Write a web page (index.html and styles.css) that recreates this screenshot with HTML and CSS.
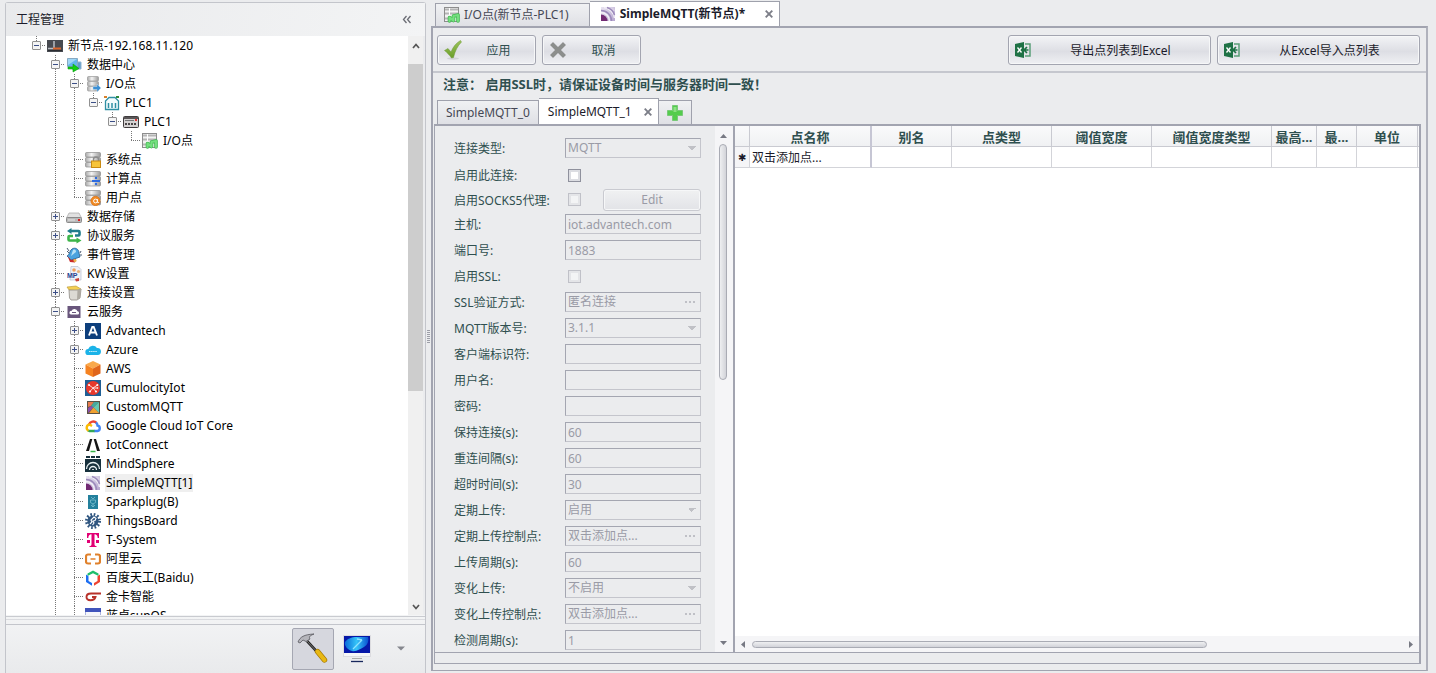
FILE: index.html
```html
<!DOCTYPE html>
<html lang="zh-CN">
<head>
<meta charset="utf-8">
<title>工程管理</title>
<link rel="stylesheet" href="styles.css">
</head>
<body>
<svg class="defs" width="0" height="0" aria-hidden="true">
  <defs>
    <linearGradient id="g-steel" x1="0" x2="1"><stop offset="0" stop-color="#a9a9a9"/><stop offset=".4" stop-color="#f4f4f4"/><stop offset="1" stop-color="#9a9a9a"/></linearGradient>
    <linearGradient id="g-check" x1="0" x2="0" y1="0" y2="1"><stop offset="0" stop-color="#9cc35a"/><stop offset="1" stop-color="#6a9e2a"/></linearGradient>
    <linearGradient id="g-screen" x1="0" x2="1"><stop offset="0" stop-color="#0a6ad8"/><stop offset=".5" stop-color="#35c4f8"/><stop offset="1" stop-color="#0a4fd0"/></linearGradient>
    <linearGradient id="g-orb" x1="0" x2="1" y1="0" y2="1"><stop offset="0" stop-color="#e9e4f1"/><stop offset="1" stop-color="#b6a6cf"/></linearGradient>
  </defs>
  <symbol id="i-node" viewBox="0 0 16 16"><rect y="2" width="16" height="12" fill="#474a50"/><path d="M7 3v8M1 10.500h5" stroke="#b9bdc2" stroke-width="1.500"/><path d="M6 10.500h8" stroke="#d9652d" stroke-width="2"/><path d="M1 12.500h14" stroke="#2c2e33"/></symbol>
  <symbol id="i-center" viewBox="0 0 16 16"><path d="M6 5h9v7H6z" fill="#5f9ccc" stroke="#8fb4d0"/><path d="M1.500 1.500h10v8h-10z" fill="#63b6ec" stroke="#87a9c2"/><path d="M2 2h9L2 8z" fill="#9fd6f6"/><path d="M2 10h5V7l6 4.500L7 15v-3H2z" fill="#12d012" stroke="#0a9c12" stroke-width=".6"/></symbol>
  <symbol id="i-stack" viewBox="0 0 16 16"><rect x=".5" y="0.500" width="15" height="4.500" rx="1" fill="url(#g-steel)" stroke="#8d8d8d" stroke-width=".7"/><rect x=".5" y="5.500" width="15" height="4.500" rx="1" fill="url(#g-steel)" stroke="#8d8d8d" stroke-width=".7"/><rect x=".5" y="10.500" width="15" height="4.500" rx="1" fill="url(#g-steel)" stroke="#8d8d8d" stroke-width=".7"/></symbol>
  <symbol id="i-io" viewBox="0 0 16 16"><g fill="url(#g-steel)" stroke="#9a9a9a" stroke-width=".7"><rect x="2.500" y=".5" width="11" height="4.500" rx="1"/><rect x="2.500" y="5.500" width="11" height="4.500" rx="1"/><rect x="2.500" y="10.500" width="11" height="4.500" rx="1"/></g><path d="M8 10.500h4V8l4 4-4 4v-2.500H8z" fill="#3b8fd4" stroke="#d7ebfa" stroke-width=".4"/></symbol>
  <symbol id="i-port" viewBox="0 0 16 16"><path d="M0 1h3v2H0z" fill="#d9822b"/><path d="M12 1h3v2h-3z" fill="#2f8a3a"/><path d="M1.500 14.500V6l3.500-3.500h6L14.500 6v8.500z" fill="#f3fbfc" stroke="#2f8fa3" stroke-width="1.300"/><path d="M4.500 8v5M8 8v5M11.500 8v5" stroke="#2f8fa3" stroke-width="1.500"/></symbol>
  <symbol id="i-plc" viewBox="0 0 16 16"><rect x=".5" y="2.500" width="15" height="11" rx="1" fill="#d5d2d2" stroke="#403c3e"/><path d="M1 3h14v2H1z" fill="#5a5657"/><path d="M12 5h2v2h-2z" fill="#d33"/><path d="M2 6.500h9" stroke="#777"/><path d="M2 9h2v2H2zM5 9h2v2H5zM8 9h2v2H8zM11 9h2v2h-2z" fill="#4a4648"/></symbol>
  <symbol id="i-iopt" viewBox="0 0 16 16"><rect x=".5" y=".5" width="14" height="14" fill="#f2f2f2" stroke="#8d8d8d"/><path d="M1 2.500h13M1 6.500h13M1 11.500h4" stroke="#b5b5b5" stroke-width="2.200"/><path d="M5.500 1v9" stroke="#fff"/><path d="M5.500 14V10.500l4 3V9l4.500-1v6" fill="none" stroke="#43b653" stroke-width="3.600" stroke-linejoin="round" stroke-linecap="round"/><path d="M5.500 14V10.500l4 3V9l4.500-1v6" fill="none" stroke="#74e07e" stroke-width="2.200" stroke-linejoin="round" stroke-linecap="round"/></symbol>
  <symbol id="i-sys" viewBox="0 0 16 16"><use href="#i-stack" width="16" height="16"/><path d="M8.500 9V7.500a2.500 2.500 0 0 1 5 0V9" fill="none" stroke="#8c8c8c" stroke-width="1.300"/><rect x="6.500" y="9" width="9" height="6.500" fill="#f7c43a" stroke="#c98a12"/></symbol>
  <symbol id="i-calc" viewBox="0 0 16 16"><use href="#i-stack" width="16" height="16"/><path d="M7 9h8v2H7z" fill="#2d6be0"/><circle cx="11" cy="7" r="1.200" fill="#2d6be0"/><circle cx="11" cy="13" r="1.200" fill="#2d6be0"/></symbol>
  <symbol id="i-user" viewBox="0 0 16 16"><use href="#i-stack" width="16" height="16"/><circle cx="10.500" cy="11" r="4.700" fill="#f08a24" stroke="#d0660c" stroke-width=".6"/><circle cx="10.500" cy="11" r="1.900" fill="none" stroke="#fff" stroke-width="1"/><path d="M12.500 9v3.500h1.500" fill="none" stroke="#fff" stroke-width=".8"/></symbol>
  <symbol id="i-disk" viewBox="0 0 16 16"><path d="M3 4h10l2.500 5H.5z" fill="#e1e1e1" stroke="#a5a5a5" stroke-width=".7"/><rect x=".5" y="8.500" width="15" height="5" rx="1" fill="#b9b9b9" stroke="#8a8a8a"/><path d="M2 11h7" stroke="#e8e8e8"/><path d="M12 10h2v2h-2z" fill="#d22"/></symbol>
  <symbol id="i-proto" viewBox="0 0 16 16"><path d="M4 3h8.500q1 0 1 1v2.500q0 1-1 1H9" fill="none" stroke="#1f7c8c" stroke-width="2.600"/><path d="M5.500 0v6L1 3z" fill="#1f7c8c"/><path d="M12 12.500H3.500q-1 0-1-1V9q0-1 1-1H7" fill="none" stroke="#3db54a" stroke-width="2.600"/><path d="M10.500 9.500v6l5-3z" fill="#3db54a"/></symbol>
  <symbol id="i-bell" viewBox="0 0 16 16"><path d="M1 1l2 3M1 4l2 2M14 6l1-2M15 9V7" stroke="#4a5a70"/><path d="M6 2c3-2 7 0 7 4l1 4-9 3-4-4c3-1 2-5 5-7z" fill="#4aa3df" stroke="#1c5a90" stroke-width=".8"/><path d="M7 3c2-1 3 0 3 2l-5 4z" fill="#b7e2f7"/><path d="M1.500 9L5 13l5-1-1 3.500-5-.5z" fill="#c92a2a"/><circle cx="9" cy="13.500" r="1.500" fill="#e9b44c"/></symbol>
  <symbol id="i-conn" viewBox="0 0 16 16"><path d="M1 2l9-1 5 3-1 2-11-1z" fill="#f5cf52" stroke="#b49433" stroke-width=".6"/><path d="M3 5h9l3-1-1 9-3 2H5L3.500 13z" fill="#dcdad4" stroke="#8f8c85" stroke-width=".8"/><path d="M11.500 5l-.5 10 3-2 1-9z" fill="#aeaaa2"/></symbol>
  <symbol id="i-cloud" viewBox="0 0 16 16"><rect x="1.500" y="2" width="13" height="12" fill="#69567c"/><path d="M5 10.500h6.500a1.600 1.600 0 0 0 0-3.200 3.200 3.200 0 0 0-6-.4A1.800 1.800 0 0 0 5 10.500z" fill="#fff"/><path d="M6 8.500h4" stroke="#69567c"/></symbol>
  <symbol id="i-adv" viewBox="0 0 16 16"><rect width="16" height="16" fill="#0d3f7c"/><path d="M4 12.500L7.300 4h1.400L12 12.500M5.500 9.500h5" fill="none" stroke="#fff" stroke-width="1.900"/></symbol>
  <symbol id="i-azure" viewBox="0 0 16 16"><path d="M3.500 13a3 3 0 0 1-.3-6A5 5 0 0 1 12 6a3.500 3.500 0 0 1 .8 7z" fill="#1bb3e8"/><path d="M4 9.500h8" stroke="#c9effb" stroke-dasharray="1.500 .6"/></symbol>
  <symbol id="i-aws" viewBox="0 0 16 16"><path d="M8 0l7.500 3.500L8 7.500.5 3.500z" fill="#f9a94b"/><path d="M.5 3.500L8 7.500V16L.5 12.500z" fill="#f58220"/><path d="M15.500 3.500L8 7.500V16l7.500-3.500z" fill="#e0661b"/></symbol>
  <symbol id="i-cumu" viewBox="0 0 16 16"><rect width="16" height="16" fill="#1f5f95"/><circle cx="8" cy="8" r="7" fill="#e8382c"/><path d="M8 8L4 5M8 8l4.500-3M8 8l-3 3.500M8 8l3 3.500M8 8h4.500" stroke="#fff" stroke-width=".8"/><g fill="#fff"><circle cx="4" cy="5" r="1"/><circle cx="12.300" cy="5" r="1"/><circle cx="5" cy="11.500" r="1"/><circle cx="11" cy="11.500" r="1"/><circle cx="12.500" cy="8" r=".8"/></g></symbol>
  <symbol id="i-custom" viewBox="0 0 16 16"><rect x="2" y="2" width="13" height="13" fill="#5a5244"/><path d="M3 3h6L6 7 3 8z" fill="#e87a4c"/><path d="M9 3h5L8.500 8.500 6 7z" fill="#45a8a0"/><path d="M14 3v11L8.500 8.500z" fill="#63c8b4"/><path d="M3 9l3-2 2.500 1.500L3 14z" fill="#8b4fb0"/><path d="M8.500 8.500L14 14H4z" fill="#f0a030"/></symbol>
  <symbol id="i-gcp" viewBox="0 0 16 16"><g fill="none" stroke-width="2.400"><path d="M4 6.500a4.600 4.600 0 0 1 7.500-1.700" stroke="#ea4335"/><path d="M11 4.500a4 4 0 0 1 1.500 3 2.800 2.800 0 0 1 0 5.500H9" stroke="#4285f4"/><path d="M9.500 13H4.500a3 3 0 0 1-1.500-.6" stroke="#34a853"/><path d="M3.500 12.700a3.300 3.300 0 0 1 1-6.200L7 8" stroke="#fbbc05"/></g></symbol>
  <symbol id="i-iotc" viewBox="0 0 16 16"><path d="M1 14L5 2h2.300L4 14zM12 14L8.700 2H11l4 12z" fill="#161616"/><path d="M5.500 14.500h5" stroke="#38b44a" stroke-width="1.500"/></symbol>
  <symbol id="i-mind" viewBox="0 0 16 16"><path d="M0 3h16v13H0z" fill="#17303c"/><path d="M1 0h4v2H1zM6 0h4v2H6zM11 0h4v2h-4z" fill="#17303c"/><path d="M1.500 13a6.500 6.500 0 0 1 13 0M4.500 14a3.500 3.500 0 0 1 7 0" fill="none" stroke="#e9f1f3" stroke-width="1.300"/><path d="M7 14a1 1 0 0 1 2 0z" fill="#fff"/></symbol>
  <symbol id="i-mqtt" viewBox="0 0 16 16"><rect x="1" y="1" width="14" height="14" fill="url(#g-orb)"/><g fill="none" stroke="#9c8abb" stroke-width="1.500"><path d="M1 6.500A8.500 8.500 0 0 1 9.500 15" stroke="#f3f0f7"/><path d="M1 4.500A10.500 10.500 0 0 1 11.500 15"/><path d="M4 1.500A12 12 0 0 1 14.500 12" stroke="#f3f0f7"/><path d="M7 1.500A11 11 0 0 1 14.500 9"/><path d="M11 1.500a8 8 0 0 1 3.500 3.500" stroke="#d8cfe6"/></g><path d="M1 8.500A6.500 6.500 0 0 1 7.500 15H1z" fill="#722a73"/></symbol>
  <symbol id="i-spark" viewBox="0 0 16 16"><rect x="3" y="1" width="10" height="14" fill="#23809c"/><path d="M6 3l2 2 2-2M5.500 6h5v2.500L8 10 5.500 8.500zM8 10v3M6 11l2 2 2-2" fill="none" stroke="#7fc0d0" stroke-width=".8"/></symbol>
  <symbol id="i-things" viewBox="0 0 16 16"><circle cx="8" cy="8" r="6.500" fill="none" stroke="#305680" stroke-width="3" stroke-dasharray="1.600 1.800"/><circle cx="8" cy="8" r="5.600" fill="#305680"/><path d="M5 11l2-2-1-2 3-3 2 1.500-1 2-2 .5L9 10l-1.500 2" fill="none" stroke="#fff" stroke-width="1.100"/></symbol>
  <symbol id="i-tsys" viewBox="0 0 16 16"><path d="M2 1h12v5h-1.300C12.500 3.500 11.500 2.400 9.500 2.300V12c0 1.500.5 2 2 2.100V15h-7v-.9c1.500-.1 2-.6 2-2.100V2.300C4.500 2.400 3.500 3.500 3.300 6H2zM2 8h3v3H2zM11 8h3v3h-3z" fill="#e20074"/></symbol>
  <symbol id="i-ali" viewBox="0 0 16 16"><path d="M6 3.500H3A2 2 0 0 0 1 5.500v5a2 2 0 0 0 2 2h3M10 3.500h3a2 2 0 0 1 2 2v5a2 2 0 0 1-2 2h-3" fill="none" stroke="#e0812c" stroke-width="2.200"/><path d="M5.500 8h5" stroke="#e0812c" stroke-width="1.500"/></symbol>
  <symbol id="i-baidu" viewBox="0 0 16 16"><path d="M2.500 3.500L8 .500l5.500 3v2.500L8 3.200 2.500 6z" fill="#1fbf6c"/><path d="M1 4.500l2.500 1.700V11L7 13v2.800L1 12z" fill="#1c6ef2"/><path d="M15 4.500l-2.500 1.700V11L9 13v2.800l6-3.800z" fill="#ee4432"/></symbol>
  <symbol id="i-gold" viewBox="0 0 16 16"><path d="M16 4.500H6C3 4.500 1.500 6 1.500 8s1.500 3.200 4 3.200c3 0 4.500-1.200 5-3.200H7" fill="none" stroke="#b8322a" stroke-width="1.900"/></symbol>
  <symbol id="i-sun" viewBox="0 0 16 16"><rect y="0" width="16" height="15" rx="1" fill="#f5f6fb" stroke="#3b4fb0" stroke-width=".8"/><path d="M0 0h16v4H0z" fill="#4054bb"/></symbol>
  <symbol id="i-excel" viewBox="0 0 16 16"><path d="M0 2l9-2v16l-9-2z" fill="#1e7145"/><path d="M2.500 5.500l4 5M6.500 5.500l-4 5" stroke="#fff" stroke-width="1.300"/><path d="M10 2h5v12h-5" fill="none" stroke="#5a9e78" stroke-width="1.500"/><path d="M13.500 8H9m3-3L9 8l3 3" fill="none" stroke="#1e7145" stroke-width="1.700"/></symbol>
  <symbol id="i-check" viewBox="0 0 18 20"><ellipse cx="9" cy="18.500" rx="6" ry="1.200" fill="#d0d2d6"/><path d="M.5 10.500L4 8.500 7 12C9 7 12 3 16.500.500L17.500 2C13.500 6 11 11 9.500 17.500L7.500 18C5.500 15 3 12.500.5 10.500z" fill="url(#g-check)" stroke="#6d9636" stroke-width=".5"/></symbol>
  <symbol id="i-cross" viewBox="0 0 16 16"><path d="M3 .500L8 5.500l5-5L15.500 3l-5 5 5 5-2.500 2.500-5-5-5 5L.500 13l5-5-5-5z" fill="#8c8e8c" stroke="#747674" stroke-width=".6" stroke-linejoin="round"/></symbol>
  <symbol id="i-plus" viewBox="0 0 16 16"><path d="M5.500.500h5v5h5v5h-5v5h-5v-5h-5v-5h5z" fill="#54cc4d" stroke="#78c978"/><path d="M6.500 2h3v5h-3z" fill="#8ce084"/></symbol>
  <symbol id="i-x" viewBox="0 0 8 8"><path d="M.7.7l6.600 6.600M7.300.7L.7 7.300" stroke="currentColor" stroke-width="1.900"/></symbol>
  <symbol id="i-hammer" viewBox="0 0 32 32"><path d="M10 8l13 14" stroke="#222" stroke-width="2.600"/><path d="M10 8l12 13" stroke="#8a8a8a" stroke-width=".8"/><path d="M1 9c2-5 6-7.500 16-8-5 2-5 3-4 5l-4 2.500-3-1.500-3 3z" fill="#b4b4ba" stroke="#55555c" stroke-width=".8"/><path d="M20.500 18.500l7 8.500" stroke="#a87b06" stroke-width="5.400" stroke-linecap="round"/><path d="M20.500 18.500l7 8.500" stroke="#e8b814" stroke-width="4" stroke-linecap="round"/></symbol>
  <symbol id="i-monitor" viewBox="0 0 28 28"><rect x=".5" y=".5" width="27" height="21" fill="#f6f6f8" stroke="#dcdce0"/><rect x="1" y="1" width="26" height="17" fill="#0618a8"/><path d="M2 7C4 4 8 2 14 2h11c1 3 0 8-4 10s-8 5-12 4-8-5-7-9z" fill="url(#g-screen)"/><path d="M10 14l9-9M14 4l5 1" stroke="#8fe3ff" stroke-width="1.300"/><path d="M9 23.500h10" stroke="#aaa"/><path d="M8 26.500h12" stroke="#17275c" stroke-width="1.300"/></symbol>
</svg>

<div class="app">
  <aside class="sidebar">
    <header class="side-head"><h1>工程管理</h1><button class="plain" aria-label="折叠"><svg width="10" height="9" viewBox="0 0 10 9"><path d="M4.500 1L1.500 4.500l3 3.500M8.500 1l-3 3.500 3 3.500" fill="none" stroke="#6b6d75" stroke-width="1.300"/></svg></button></header>
    <div class="side-body">
      <nav class="tree" aria-label="工程树">
        <ul>
          <li class="last"><div class="row"><i class="box minus"></i><svg class="ic"><use href="#i-node"/></svg><span>新节点-192.168.11.120</span></div>
            <ul>
              <li><div class="row"><i class="box minus"></i><svg class="ic"><use href="#i-center"/></svg><span>数据中心</span></div>
                <ul>
                  <li><div class="row"><i class="box minus"></i><svg class="ic"><use href="#i-io"/></svg><span>I/O点</span></div>
                    <ul>
                      <li class="last"><div class="row"><i class="box minus"></i><svg class="ic"><use href="#i-port"/></svg><span>PLC1</span></div>
                        <ul>
                          <li class="last"><div class="row"><i class="box minus"></i><svg class="ic"><use href="#i-plc"/></svg><span>PLC1</span></div>
                            <ul>
                              <li class="last"><div class="row"><svg class="ic"><use href="#i-iopt"/></svg><span>I/O点</span></div></li>
                            </ul>
                          </li>
                        </ul>
                      </li>
                    </ul>
                  </li>
                  <li><div class="row"><svg class="ic"><use href="#i-sys"/></svg><span>系统点</span></div></li>
                  <li><div class="row"><svg class="ic"><use href="#i-calc"/></svg><span>计算点</span></div></li>
                  <li class="last"><div class="row"><svg class="ic"><use href="#i-user"/></svg><span>用户点</span></div></li>
                </ul>
              </li>
              <li><div class="row"><i class="box"></i><svg class="ic"><use href="#i-disk"/></svg><span>数据存储</span></div></li>
              <li><div class="row"><i class="box"></i><svg class="ic"><use href="#i-proto"/></svg><span>协议服务</span></div></li>
              <li><div class="row"><svg class="ic"><use href="#i-bell"/></svg><span>事件管理</span></div></li>
              <li><div class="row"><svg class="ic" viewBox="0 0 16 16"><path d="M5 .500h7l3 3V14H4z" fill="#eef1f8" stroke="#b7bfd0" stroke-width=".7"/><circle cx="8" cy="4" r="1.800" fill="#f0a060"/><circle cx="12.500" cy="5.500" r="1.600" fill="#e8b27a"/><path d="M9 13l4-1v3l-3 .5z" fill="#c9413a"/><text x="1" y="12" class="mp">MP</text></svg><span>KW设置</span></div></li>
              <li><div class="row"><i class="box"></i><svg class="ic"><use href="#i-conn"/></svg><span>连接设置</span></div></li>
              <li><div class="row"><i class="box minus"></i><svg class="ic"><use href="#i-cloud"/></svg><span>云服务</span></div>
                <ul>
                  <li><div class="row"><i class="box"></i><svg class="ic"><use href="#i-adv"/></svg><span>Advantech</span></div></li>
                  <li><div class="row"><i class="box"></i><svg class="ic"><use href="#i-azure"/></svg><span>Azure</span></div></li>
                  <li><div class="row"><svg class="ic"><use href="#i-aws"/></svg><span>AWS</span></div></li>
                  <li><div class="row"><svg class="ic"><use href="#i-cumu"/></svg><span>CumulocityIot</span></div></li>
                  <li><div class="row"><svg class="ic"><use href="#i-custom"/></svg><span>CustomMQTT</span></div></li>
                  <li><div class="row"><svg class="ic"><use href="#i-gcp"/></svg><span>Google Cloud IoT Core</span></div></li>
                  <li><div class="row"><svg class="ic"><use href="#i-iotc"/></svg><span>IotConnect</span></div></li>
                  <li><div class="row"><svg class="ic"><use href="#i-mind"/></svg><span>MindSphere</span></div></li>
                  <li><div class="row selected"><svg class="ic"><use href="#i-mqtt"/></svg><span>SimpleMQTT[1]</span></div></li>
                  <li><div class="row"><svg class="ic"><use href="#i-spark"/></svg><span>Sparkplug(B)</span></div></li>
                  <li><div class="row"><svg class="ic"><use href="#i-things"/></svg><span>ThingsBoard</span></div></li>
                  <li><div class="row"><svg class="ic"><use href="#i-tsys"/></svg><span>T-System</span></div></li>
                  <li><div class="row"><svg class="ic"><use href="#i-ali"/></svg><span>阿里云</span></div></li>
                  <li><div class="row"><svg class="ic"><use href="#i-baidu"/></svg><span>百度天工(Baidu)</span></div></li>
                  <li><div class="row"><svg class="ic"><use href="#i-gold"/></svg><span>金卡智能</span></div></li>
                  <li><div class="row"><svg class="ic"><use href="#i-sun"/></svg><span>蓝卓supOS</span></div></li>
                </ul>
              </li>
            </ul>
          </li>
        </ul>
      </nav>
      <div class="tree-scroll">
        <svg width="8" height="6" viewBox="0 0 8 6"><path d="M1 5l3-3.500L7 5" fill="none" stroke="#555" stroke-width="1.700"/></svg>
        <div class="thumb"></div>
        <svg width="8" height="6" viewBox="0 0 8 6"><path d="M1 1l3 3.500L7 1" fill="none" stroke="#555" stroke-width="1.700"/></svg>
      </div>
    </div>
    <footer class="side-foot">
      <button class="tool active" aria-label="工程"><svg width="32" height="32"><use href="#i-hammer"/></svg></button>
      <button class="tool" aria-label="监控"><svg width="28" height="28"><use href="#i-monitor"/></svg></button>
      <button class="tool" aria-label="更多"><svg width="8" height="5" viewBox="0 0 8 5"><path d="M0 .500h8L4 4.500z" fill="#85878e"/></svg></button>
    </footer>
  </aside>
  <div class="splitter"><span></span></div>

  <main class="main">
    <div class="tabs">
      <button class="tab"><svg class="ic"><use href="#i-iopt"/></svg>I/O点(新节点-PLC1)</button>
      <button class="tab on bold"><svg class="ic"><use href="#i-mqtt"/></svg>SimpleMQTT(新节点)*<svg class="x"><use href="#i-x"/></svg></button>
    </div>
    <div class="frame">
      <div class="toolbar">
        <button class="btn slate"><svg width="18" height="20"><use href="#i-check"/></svg><span>应用</span></button>
        <button class="btn slate"><svg width="18" height="16"><use href="#i-cross"/></svg><span>取消</span></button>
        <div class="grow"></div>
        <button class="btn wide"><svg class="ic"><use href="#i-excel"/></svg><span>导出点列表到Excel</span></button>
        <button class="btn wide"><svg class="ic"><use href="#i-excel"/></svg><span>从Excel导入点列表</span></button>
      </div>
      <div class="page">
        <p class="notice">注意： 启用SSL时，请保证设备时间与服务器时间一致！</p>
        <div class="tabs sub">
          <button class="tab">SimpleMQTT_0</button>
          <button class="tab on">SimpleMQTT_1<svg class="x"><use href="#i-x"/></svg></button>
          <button class="tab add" aria-label="添加"><svg class="ic"><use href="#i-plus"/></svg></button>
        </div>
        <div class="tab-body">
          <div class="split">
            <div class="form-pane">
              <form class="form">
                <div class="field first"><label for="f1">连接类型:</label><select id="f1" disabled><option>MQTT</option></select></div>
                <div class="field"><label for="f2">启用此连接:</label><input type="checkbox" id="f2"></div>
                <div class="field proxy"><label for="f3">启用SOCKS5代理:</label><input type="checkbox" id="f3" disabled><button type="button" class="btn edit" disabled>Edit</button></div>
                <div class="field"><label for="f4">主机:</label><input type="text" id="f4" value="iot.advantech.com" disabled></div>
                <div class="field"><label for="f5">端口号:</label><input type="text" id="f5" value="1883" disabled></div>
                <div class="field"><label for="f6">启用SSL:</label><input type="checkbox" id="f6" disabled></div>
                <div class="field"><label for="f7">SSL验证方式:</label><div class="pick"><input type="text" id="f7" value="匿名连接" disabled><button type="button" disabled aria-label="选择"></button></div></div>
                <div class="field"><label for="f8">MQTT版本号:</label><select id="f8" disabled><option>3.1.1</option></select></div>
                <div class="field"><label for="f9">客户端标识符:</label><input type="text" id="f9" disabled></div>
                <div class="field"><label for="f10">用户名:</label><input type="text" id="f10" disabled></div>
                <div class="field"><label for="f11">密码:</label><input type="password" id="f11" disabled></div>
                <div class="field"><label for="f12">保持连接(s):</label><input type="text" id="f12" value="60" disabled></div>
                <div class="field"><label for="f13">重连间隔(s):</label><input type="text" id="f13" value="60" disabled></div>
                <div class="field"><label for="f14">超时时间(s):</label><input type="text" id="f14" value="30" disabled></div>
                <div class="field"><label for="f15">定期上传:</label><select id="f15" disabled><option>启用</option></select></div>
                <div class="field"><label for="f16">定期上传控制点:</label><div class="pick"><input type="text" id="f16" value="双击添加点..." disabled><button type="button" disabled aria-label="选择"></button></div></div>
                <div class="field"><label for="f17">上传周期(s):</label><input type="text" id="f17" value="60" disabled></div>
                <div class="field"><label for="f18">变化上传:</label><select id="f18" disabled><option>不启用</option></select></div>
                <div class="field"><label for="f19">变化上传控制点:</label><div class="pick"><input type="text" id="f19" value="双击添加点..." disabled><button type="button" disabled aria-label="选择"></button></div></div>
                <div class="field"><label for="f20">检测周期(s):</label><input type="text" id="f20" value="1" disabled></div>
              </form>
              <div class="vscroll">
                <svg width="7" height="4" viewBox="0 0 7 4"><path d="M0 4l3.500-4L7 4z" fill="#777983"/></svg>
                <div class="thumb"></div>
                <svg width="7" height="4" viewBox="0 0 7 4"><path d="M0 0l3.500 4L7 0z" fill="#777983"/></svg>
              </div>
            </div>
            <div class="grid-pane">
              <div class="grid-body">
                <table>
                  <colgroup><col class="c-ind"><col class="c-name"><col class="c-alias"><col class="c-100"><col class="c-100"><col class="c-120"><col class="c-45"><col class="c-40"><col class="c-61"><col></colgroup>
                  <thead><tr><th></th><th class="pin">点名称</th><th>别名</th><th>点类型</th><th>阈值宽度</th><th>阈值宽度类型</th><th>最高...</th><th>最...</th><th>单位</th><th></th></tr></thead>
                  <tbody><tr><td class="ind">✱</td><td class="pin">双击添加点...</td><td></td><td></td><td></td><td></td><td></td><td></td><td></td><td></td></tr></tbody>
                </table>
              </div>
              <div class="hscroll">
                <svg width="4" height="7" viewBox="0 0 4 7"><path d="M4 0L0 3.500 4 7z" fill="#777983"/></svg>
                <div class="track"><div class="thumb"></div></div>
                <svg width="4" height="7" viewBox="0 0 4 7"><path d="M0 0l4 3.500L0 7z" fill="#777983"/></svg>
              </div>
            </div>
          </div>
        </div>
      </div>
    </div>
  </main>
</div>
</body>
</html>
```
FILE: styles.css
```css
* { box-sizing: border-box; }

body {
  margin: 0;
  background: #ebecee;
  color: #1b1b2a;
  font: 12px/18px "Noto Sans", "Noto Sans CJK SC", sans-serif;
}

button, input, select { font: inherit; color: inherit; margin: 0; }
button { padding: 0; background: none; border: 0; }
ul { list-style: none; margin: 0; padding: 0; }
.defs { display: block; height: 0; }
.ic { width: 16px; height: 16px; flex: none; }
.grow { flex: 1; }
.mp { font: 700 7px "Liberation Sans", sans-serif; fill: #27408f; }

.app { display: flex; height: 100vh; }

/* project tree */
.sidebar {
  display: flex;
  flex-direction: column;
  width: 421px;
  margin: 2px 0 0 5px;
  border: 1px solid #c3c5cb;
  border-bottom: 0;
  border-radius: 3px 3px 0 0;
}
.side-head {
  display: flex;
  align-items: center;
  justify-content: space-between;
  height: 33px;
  padding: 0 13px 0 10px;
  background: linear-gradient(100deg, #e9eaec, #f3f4f5);
}
.side-head h1 { margin: 0; font-size: 12px; font-weight: 400; }
.plain { display: flex; }
.side-body { display: flex; flex: 1; min-height: 0; }
.tree { flex: 1; overflow: hidden; background: #fff; padding-left: 22px; color: #000; }
.tree ul ul { padding-left: 19px; }
.tree li {
  background: repeating-linear-gradient(#777 0 1px, transparent 1px 2px) 8px 0 / 1px 100% no-repeat;
}
.tree li.last { background-size: 1px 10px; }
.row {
  display: flex;
  align-items: center;
  gap: 4px;
  height: 19px;
  padding-left: 19px;
  background: repeating-linear-gradient(90deg, #777 0 1px, transparent 1px 2px) 8px 9px / 10px 1px no-repeat;
}
.row span { padding: 0 1px; white-space: nowrap; }
.row.selected span { background: #efefef; }
.box {
  width: 9px;
  height: 9px;
  margin: 0 2px 0 -15px;
  border: 1px solid #919191;
  border-radius: 1px;
  background:
    linear-gradient(#3c4f87, #3c4f87) center / 5px 1px no-repeat,
    linear-gradient(#3c4f87, #3c4f87) center / 1px 5px no-repeat,
    #f4f4f4;
}
.box.minus { background: linear-gradient(#3c4f87, #3c4f87) center / 5px 1px no-repeat, #f4f4f4; }
.tree-scroll {
  display: flex;
  flex-direction: column;
  align-items: center;
  width: 15px;
  margin-right: 2px;
  padding: 7px 0 5px;
  background: #f0f0f0;
}
.tree-scroll .thumb { width: 15px; height: 327px; margin: 15px 0 auto; background: #cdcdcd; }
.side-foot {
  display: flex;
  align-items: center;
  justify-content: flex-end;
  height: 58px;
  padding: 11px 3px 2px;
  background:
    linear-gradient(#c9cbd0, #c9cbd0) 0 1px / 100% 1px no-repeat,
    linear-gradient(#dadbdf, #dadbdf) 0 4px / 100% 1px no-repeat,
    linear-gradient(#c3c5cb, #c3c5cb) 0 9px / 100% 1px no-repeat,
    linear-gradient(#f3f4f5, #e9eaec);
}
.tool { display: grid; place-items: center; width: 42px; height: 42px; border: 1px solid transparent; border-radius: 2px; }
.tool.active { background: #d6d7de; border-color: #a5a7b2; }
.tool + .tool { margin-left: 2px; }

.splitter { display: flex; align-items: center; width: 5px; }
.splitter span {
  width: 3px;
  height: 13px;
  margin: 0 1px;
  background: repeating-linear-gradient(#9d9fa8 0 1px, transparent 1px 2px);
}

/* document area */
.main { display: flex; flex-direction: column; flex: 1; min-width: 0; padding: 1px 8px 2px 0; }
.tabs { display: flex; align-items: flex-end; height: 25px; padding-left: 4px; }
.tab {
  display: flex;
  align-items: center;
  gap: 4px;
  height: 23px;
  padding: 0 20px 0 8px;
  border: 1px solid #9fa1ac;
  border-bottom: 0;
  background: linear-gradient(#f0f1f3, #dfe0e5);
  color: #454754;
  white-space: nowrap;
}
.tab + .tab { border-left: 0; }
.tab.on { height: 25px; padding: 0 6px 0 10px; background: #fff; color: #1b1b2a; }
.tab.bold { font-weight: 700; }
.tab .x { width: 8px; height: 8px; margin-left: 8px; color: #7c7e88; }
.tab.bold .x { margin-left: 16px; }
.sub { height: 26px; padding-left: 3px; }
.sub .tab { height: 24px; padding: 0 8px; }
.sub .tab.on { height: 26px; padding: 0 6px 0 9px; }

.frame {
  display: flex;
  flex-direction: column;
  flex: 1;
  min-height: 0;
  padding-bottom: 6px;
  border: 2px solid #a2a4b0;
  border-right-color: #b0b2bc;
  border-bottom-width: 1px;
}
.toolbar {
  display: flex;
  align-items: flex-start;
  gap: 6px;
  height: 45px;
  padding: 7px 6px 0 4px;
  border-bottom: 2px solid #c5c7ce;
}
.btn {
  display: flex;
  align-items: center;
  width: 99px;
  height: 30px;
  padding-left: 6px;
  border: 1px solid #a3a5b0;
  border-radius: 3px;
  background: linear-gradient(#f3f4f6, #dddee4 55%, #eff0f3);
  box-shadow: inset 0 0 0 1px #f6f7f8;
  color: #1b1b2a;
}
.btn span { flex: 1; padding-top: 2px; text-align: center; }
.btn.wide { width: 203px; }
.btn.slate { color: #2f4f4f; }

.page {
  display: flex;
  flex-direction: column;
  flex: 1;
  min-height: 0;
  margin-left: 1px;
}
.notice { margin: 0; padding: 2px 9px 5px; font-size: 13px; font-weight: 700; color: #2f4f4f; }
.tab-body {
  display: flex;
  flex: 1;
  min-height: 0;
  margin-right: 5px;
  padding-bottom: 10px;
  border: solid #a2a4b0;
  border-width: 2px 2px 1px 1px;
}
.split { display: flex; flex: 1; min-width: 0; border-bottom: 1px solid #a2a4b0; }

/* settings form */
.form-pane { display: flex; width: 300px; border-right: 2px solid #a2a4b0; }
.form { flex: 1; padding: 8px 14px 0 19px; overflow: hidden; color: #2f4f4f; }
.field { display: grid; grid-template-columns: 111px 1fr; align-items: center; height: 26px; }
.field.first { height: 28px; }
.field.proxy { grid-template-columns: 111px 1fr 98px; height: 23px; }
.field label { padding-top: 2px; white-space: nowrap; }
.field input[type="text"], .field input[type="password"], .field select {
  width: 100%;
  min-width: 0;
  height: 20px;
  padding: 0 2px;
  border: 1px solid #a4a6b1;
  border-right-color: #c4c5cc;
  border-bottom-color: #c4c5cc;
  border-radius: 0;
  background: #ebecee;
  color: #9a9ba6;
  opacity: 1;
}
.field select {
  appearance: none;
  background:
    linear-gradient(45deg, transparent 50%, #c0c1c6 50%) right 8px center / 4px 4px no-repeat,
    linear-gradient(-45deg, transparent 50%, #c0c1c6 50%) right 4px center / 4px 4px no-repeat,
    #ebecee;
}
.field input[type="checkbox"] {
  appearance: none;
  width: 13px;
  height: 13px;
  margin-left: 3px;
  border: 1px solid #8f919d;
  background: #fff;
  box-shadow: inset 0 0 0 2px #dcdde2;
}
.field input[type="checkbox"]:disabled { border-color: #c0c1c8; background: #f3f4f5; box-shadow: inset 0 0 0 2px #e4e5e8; }
.btn.edit { justify-content: center; width: 98px; height: 22px; padding: 0; border-color: #c9cad0; background: linear-gradient(#f0f1f2, #e2e3e7); color: #9a9ba6; }
.pick { display: flex; border: 1px solid #a4a6b1; border-right-color: #c4c5cc; border-bottom-color: #c4c5cc; }
.field .pick input { flex: 1; height: 18px; border: 0; }
.pick button {
  width: 18px;
  background: repeating-linear-gradient(90deg, #bfc0c6 0 2px, transparent 2px 4px) 3px center / 10px 2px no-repeat;
}
.vscroll {
  display: flex;
  flex-direction: column;
  align-items: center;
  width: 18px;
  padding: 8px 2px 7px 0;
  background: #f5f5f7;
}
.vscroll .thumb { width: 8px; height: 236px; margin: 6px 0 auto; border: 1px solid #a9abb4; border-radius: 4px; background: linear-gradient(90deg, #eeeff1, #d2d3d9); }

/* point table */
.grid-pane { display: flex; flex-direction: column; flex: 1; min-width: 0; background: #fff; }
.grid-body { flex: 1; overflow: hidden; }
table { width: 100%; table-layout: fixed; border-collapse: separate; border-spacing: 0; }
th, td { height: 21px; padding: 1px 2px 0; border: solid #d3d4d9; border-width: 0 1px 1px 0; white-space: nowrap; overflow: hidden; }
th { background: linear-gradient(#fafafb, #f0f1f3); border-color: #c9cad1; color: #2f4f4f; font-size: 13px; text-align: center; }
th:last-child, td:last-child { border-right: 0; padding: 0; }
.pin { border-right: 2px solid #c6c6d4; }
.ind { padding: 0; background: #f5f5f7; font-size: 10px; text-align: center; }
.c-ind { width: 15px; }
.c-name { width: 122px; }
.c-alias { width: 80px; }
.c-100 { width: 100px; }
.c-120 { width: 120px; }
.c-45 { width: 45px; }
.c-40 { width: 40px; }
.c-61 { width: 61px; }
.hscroll { display: flex; align-items: center; gap: 7px; height: 16px; padding: 0 6px; background: #f5f5f7; }
.track { flex: 1; }
.hscroll .thumb { width: 70%; height: 7px; border: 1px solid #a9abb4; border-radius: 4px; background: linear-gradient(#eeeff1, #d2d3d9); }
```
